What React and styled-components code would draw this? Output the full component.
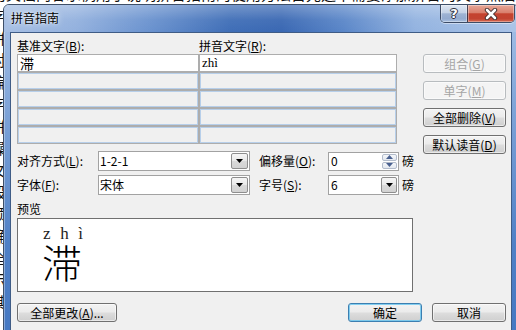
import React from 'react';
import styled, { createGlobalStyle } from 'styled-components';

const UI_FONT = `"Noto Sans CJK SC", "Noto Sans", sans-serif`;

const Global = createGlobalStyle`
  html, body { margin: 0; padding: 0; background: #fff; }
  body { width: 516px; height: 330px; overflow: hidden; font-family: ${UI_FONT}; }
  * { box-sizing: border-box; }
`;

const Desktop = styled.div`
  position: relative;
  width: 516px;
  height: 330px;
  overflow: hidden;
  background: #fff;
`;

const Doc = styled.div`
  margin: -17px 0 0 -9px;
  width: 560px;
  font: 15px/22px ${UI_FONT};
  color: #111;
  white-space: nowrap;
`;

const Window = styled.div`
  position: absolute;
  left: 3px;
  top: 4px;
  width: 516px;
  height: 345px;
  display: flex;
  flex-direction: column;
  border: 1px solid #3e4f68;
  border-radius: 6px 6px 0 0;
  padding: 0 6px 6px 6px;
  background: linear-gradient(180deg, #a9c3e7 0%, #7fa4d8 30%, #4f80c6 70%, #4477c2 100%);
  box-shadow: inset 0 0 0 1px rgba(255, 255, 255, 0.35);
`;

const TitleBar = styled.div`
  height: 27px;
  margin: 0 -6px;
  padding: 0 3px 0 7px;
  display: flex;
  align-items: flex-start;
  justify-content: space-between;
  border-radius: 5px 5px 0 0;
  background:
    linear-gradient(180deg, rgba(255,255,255,0.28) 0%, rgba(255,255,255,0.05) 55%, rgba(255,255,255,0) 100%),
    linear-gradient(90deg, #a6bfe4 0%, #93b1de 14%, #6b93cf 28%, #3f6eb7 44%, #3a68b3 54%, #5a86c8 66%, #93b3e0 80%, #a9c3e7 100%);
`;

const TitleText = styled.span`
  margin-top: 5px;
  font: 12px/16px ${UI_FONT};
  color: #000;
  text-shadow: 0 0 6px rgba(255, 255, 255, 0.9), 0 0 2px rgba(255, 255, 255, 0.8);
`;

const CaptionGroup = styled.div`
  display: flex;
  height: 18px;
  border: 1px solid rgba(36, 48, 70, 0.8);
  border-top: none;
  border-radius: 0 0 5px 5px;
  overflow: hidden;
  box-shadow: 0 1px 0 rgba(255, 255, 255, 0.45);
`;

const CaptionButton = styled.div`
  width: ${p => p.$w}px;
  height: 100%;
  display: flex;
  align-items: center;
  justify-content: center;
  box-shadow: inset 0 0 0 1px rgba(255, 255, 255, 0.35);
  background: ${p => p.$kind === 'close'
    ? 'linear-gradient(180deg, #e7a898 0%, #d9806d 45%, #c4432f 52%, #c24431 80%, #d56a52 100%)'
    : 'linear-gradient(180deg, #dfe7f2 0%, #c4d2e6 45%, #9eb3d3 52%, #94abcf 80%, #a9c0e0 100%)'};
  & + & { border-left: 1px solid rgba(36, 48, 70, 0.8); }
`;

const HelpGlyph = styled.span`
  font: bold 13px/1 "DejaVu Sans", sans-serif;
  color: #fff;
  text-shadow: 0 0 1px #223, 1px 0 0 #334, -1px 0 0 #334, 0 1px 0 #334, 0 -1px 0 #334;
`;

const Client = styled.div`
  flex: 1;
  display: flex;
  flex-direction: column;
  border: 1px solid #3f5c86;
  background: #f0f0f0;
  padding: 5px 5px 0 6px;
  font: 12px/16px ${UI_FONT};
  color: #000;
`;

const Upper = styled.div`
  display: flex;
  align-items: flex-start;
`;

const LeftCol = styled.div`
  width: 396px;
  display: flex;
  flex-direction: column;
`;

const RightCol = styled.div`
  margin: 16px 0 0 10px;
  display: flex;
  flex-direction: column;
  gap: 8px;
`;

const LabelRow = styled.div`
  display: grid;
  grid-template-columns: 182px auto;
  height: 16px;
`;

const Label = styled.span`
  font: 12px/16px ${UI_FONT};
  white-space: nowrap;
  padding-left: ${p => p.$pl || 0}px;
`;

const TextGrid = styled.div`
  width: 380px;
  display: grid;
  grid-template-columns: 180px 196px;
  grid-auto-rows: 16px;
  gap: 2px;
  padding: 1px;
  background: #adadad;
`;

const Cell = styled.div`
  background: ${p => (p.$active ? '#fff' : '#f0f0f0')};
  border: ${p => (p.$active ? 'none' : '1px solid #b7cfea')};
  padding-left: 2px;
  display: flex;
  align-items: center;
  font: ${p => (p.$latin ? '13px/16px "Liberation Serif", serif' : `14px/16px ${UI_FONT}`)};
  color: #000;
`;

const Settings = styled.div`
  margin-top: 7px;
  display: grid;
  grid-template-columns: 81px 152px 78px 71px auto;
  grid-auto-rows: 20px;
  row-gap: 4px;
  align-items: center;
`;

const Combo = styled.div`
  height: ${p => p.$h || 20}px;
  border: 1px solid #a2a2a2;
  background: #fff;
  display: flex;
  padding: 1px;
`;

const FieldText = styled.span`
  flex: 1;
  font: 12px/16px ${UI_FONT};
  padding-left: ${p => p.$pl || 0}px;
  display: flex;
  align-items: center;
`;

const DropButton = styled.span`
  width: ${p => p.$w}px;
  border: 1px solid #8e8e8e;
  border-radius: 2px;
  background: linear-gradient(180deg, #f6f6f6 0%, #e9e9e9 48%, #d9d9d9 52%, #d2d2d2 100%);
  display: flex;
  align-items: center;
  justify-content: center;
`;

const SpinButtons = styled.span`
  width: 15px;
  display: flex;
  flex-direction: column;
  gap: 1px;
`;

const SpinHalf = styled.span`
  flex: 1;
  border: 1px solid #b3bccb;
  border-radius: 2px;
  background: linear-gradient(180deg, #f5f7fa 0%, #e3e8ef 100%);
  display: flex;
  align-items: center;
  justify-content: center;
`;

const Unit = styled.span`
  padding-left: 3px;
  font: 12px/16px ${UI_FONT};
`;

const PreviewLabel = styled.span`
  margin-top: 6px;
  height: 16px;
  font: 12px/16px ${UI_FONT};
`;

const PreviewBox = styled.div`
  margin-top: 1px;
  width: 396px;
  height: 74px;
  border: 1px solid #707070;
  background: #fff;
  padding: 6px 0 0 25px;
  display: flex;
  flex-direction: column;
`;

const RubyLine = styled.div`
  width: 40px;
  display: flex;
  justify-content: space-between;
  font: 17px/17px "Liberation Serif", serif;
  color: #1c1c1c;
`;

const BaseChar = styled.div`
  margin: -1px 0 0 -1px;
  font: 300 40px/40px ${UI_FONT};
  color: #000;
`;

const BottomRow = styled.div`
  margin-top: 11px;
  display: flex;
  gap: 10px;
`;

const Spacer = styled.span`
  flex: 1;
`;

const Btn = styled.div`
  width: ${p => p.$w || 83}px;
  height: 19px;
  display: flex;
  align-items: center;
  justify-content: center;
  font: 12px/16px ${UI_FONT};
  white-space: nowrap;
  color: ${p => (p.$disabled ? '#a5a5a5' : '#000')};
  border: 1px solid ${p => (p.$default ? '#3c7fb1' : p.$disabled ? '#b8bcbf' : '#707070')};
  border-radius: 3px;
  background: ${p => (p.$disabled
    ? '#f4f4f4'
    : 'linear-gradient(180deg, #f3f3f3 0%, #ebebeb 48%, #dddddd 52%, #cfcfcf 100%)')};
  box-shadow: inset 0 0 0 1px ${p => (p.$default ? 'rgba(110, 200, 240, 0.85)' : 'rgba(255, 255, 255, 0.55)')};
`;

const DownTri = () => (
  <svg width="7" height="4" viewBox="0 0 7 4"><path d="M0 0H7L3.5 4Z" fill="#000" /></svg>
);

const SpinArrow = ({ up }) => (
  <svg width="7" height="4" viewBox="0 0 7 4">
    <path d={up ? 'M0 4H7L3.5 0Z' : 'M0 0H7L3.5 4Z'} fill="#4a6190" />
  </svg>
);

const CloseX = () => (
  <svg width="14" height="12" viewBox="0 0 14 12">
    <path d="M3 2L11 10M11 2L3 10" stroke="#3a2a2a" strokeWidth="4.4" strokeLinecap="round" />
    <path d="M3 2L11 10M11 2L3 10" stroke="#fff" strokeWidth="2.6" strokeLinecap="round" />
  </svg>
);

const K = ({ c }) => <u>{c}</u>;

const docLines = [
  '的文档内容示例用于说明拼音指南的使用方法首先选中需要添加拼音的文字然后打开拼音指南对话框进行设置',
  '字体字号对齐方式偏移量等参数可以根据需要调整预览区域会显示效果确定后文字上方将显示拼音',
  '拼音指南格式设置说明文字内容示例段落',
  '对齐方式文字拼音示例',
  '偏移量设置示例内容',
  '字号字体示例内容说明',
  '拼音指南使用方法',
  '操作步骤说明示例',
  '文字内容说明示例',
  '段落格式设置示例',
  '预览效果说明示例',
  '确定取消按钮说明',
  '全部更改按钮说明',
  '示例文档内容结束',
  '其他说明文字示例',
];

export default function App() {
  return (
    <>
      <Global />
      <Desktop>
        <Doc>
          {docLines.map((l, i) => (
            <div key={i}>{l}</div>
          ))}
        </Doc>
        <Window>
          <TitleBar>
            <TitleText>拼音指南</TitleText>
            <CaptionGroup>
              <CaptionButton $w={26}><HelpGlyph>?</HelpGlyph></CaptionButton>
              <CaptionButton $w={47} $kind="close"><CloseX /></CaptionButton>
            </CaptionGroup>
          </TitleBar>
          <Client>
            <Upper>
              <LeftCol>
                <LabelRow>
                  <Label>基准文字(<K c="B" />):</Label>
                  <Label>拼音文字(<K c="R" />):</Label>
                </LabelRow>
                <TextGrid>
                  <Cell $active>滞</Cell>
                  <Cell $active $latin>zhì</Cell>
                  {Array.from({ length: 8 }).map((_, i) => (
                    <Cell key={i} />
                  ))}
                </TextGrid>
                <Settings>
                  <Label>对齐方式(<K c="L" />):</Label>
                  <Combo>
                    <FieldText>1-2-1</FieldText>
                    <DropButton $w={17}><DownTri /></DropButton>
                  </Combo>
                  <Label $pl={9}>偏移量(<K c="O" />):</Label>
                  <Combo $h={19}>
                    <FieldText $pl={1}>0</FieldText>
                    <SpinButtons>
                      <SpinHalf><SpinArrow up /></SpinHalf>
                      <SpinHalf><SpinArrow /></SpinHalf>
                    </SpinButtons>
                  </Combo>
                  <Unit>磅</Unit>
                  <Label>字体(<K c="F" />):</Label>
                  <Combo>
                    <FieldText>宋体</FieldText>
                    <DropButton $w={17}><DownTri /></DropButton>
                  </Combo>
                  <Label $pl={9}>字号(<K c="S" />):</Label>
                  <Combo>
                    <FieldText $pl={1}>6</FieldText>
                    <DropButton $w={16}><DownTri /></DropButton>
                  </Combo>
                  <Unit>磅</Unit>
                </Settings>
                <PreviewLabel>预览</PreviewLabel>
                <PreviewBox>
                  <RubyLine>
                    <span>z</span>
                    <span>h</span>
                    <span>ì</span>
                  </RubyLine>
                  <BaseChar>滞</BaseChar>
                </PreviewBox>
              </LeftCol>
              <RightCol>
                <Btn $disabled>组合(<K c="G" />)</Btn>
                <Btn $disabled>单字(<K c="M" />)</Btn>
                <Btn>全部删除(<K c="V" />)</Btn>
                <Btn>默认读音(<K c="D" />)</Btn>
              </RightCol>
            </Upper>
            <BottomRow>
              <Btn $w={100}>全部更改(<K c="A" />)...</Btn>
              <Spacer />
              <Btn $w={74} $default>确定</Btn>
              <Btn $w={74}>取消</Btn>
            </BottomRow>
          </Client>
        </Window>
      </Desktop>
    </>
  );
}
